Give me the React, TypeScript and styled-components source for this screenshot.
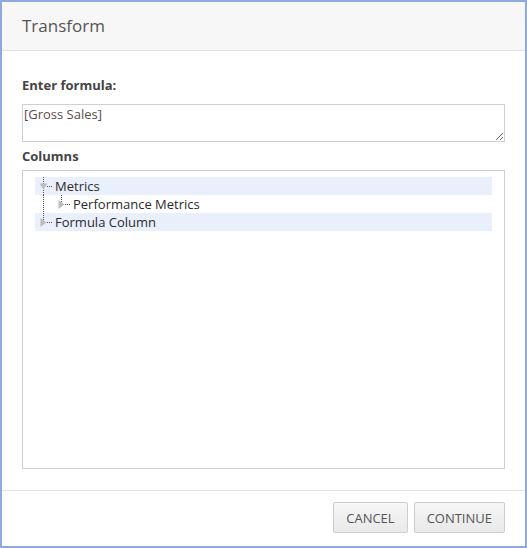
import React from "react";
import styled, { createGlobalStyle } from "styled-components";

const Global = createGlobalStyle`
  html, body { margin: 0; padding: 0; background: #fff; }
  body { font-family: "Open Sans", "Noto Sans", sans-serif; }
  * { box-sizing: border-box; }
`;

const Dialog = styled.div`
  width: 527px;
  height: 548px;
  border: 2px solid #8eabe0;
  background: #fff;
  display: flex;
  flex-direction: column;
`;

const Header = styled.div`
  height: 49px;
  flex: none;
  background: #f7f7f7;
  border-bottom: 1px solid #e1e1e1;
  display: flex;
  align-items: center;
  padding: 0 20px;
`;

const Title = styled.h1`
  margin: 0;
  font-size: 17px;
  font-weight: 400;
  color: #555;
  line-height: 22px;
`;

const Body = styled.div`
  flex: 1;
  display: flex;
  flex-direction: column;
  padding: 25px 20px 21px 20px;
  border-bottom: 1px solid #e3e3e3;
`;

const Label = styled.div<{ $mt?: number }>`
  font-size: 13px;
  font-weight: 700;
  color: #444;
  line-height: 18px;
  margin-top: ${(p) => p.$mt ?? 0}px;
`;

const Formula = styled.textarea`
  margin-top: 10px;
  width: 100%;
  height: 38px;
  border: 1px solid #cfcfcf;
  border-radius: 0;
  padding: 0 1px;
  font-family: "Open Sans", "Noto Sans", sans-serif;
  font-size: 13px;
  line-height: 18px;
  color: #5a4a4a;
  resize: vertical;
  outline: none;
  display: block;
`;

const TreeBox = styled.div`
  margin-top: 5px;
  flex: 1;
  border: 1px solid #cfcfcf;
  padding: 6px 12px;
`;

const Row = styled.div<{ $hl?: boolean; $indent?: number }>`
  height: 18px;
  display: flex;
  align-items: center;
  background: ${(p) => (p.$hl ? "#e9f0fb" : "transparent")};
  padding-left: ${(p) => p.$indent ?? 0}px;
  font-size: 13px;
  color: #2b2b2b;
  line-height: 18px;
  white-space: nowrap;
`;

const Connector = styled.svg<{ $w?: number }>`
  flex: none;
  width: ${(p) => p.$w ?? 20}px;
  height: 18px;
  display: block;
`;

const Footer = styled.div`
  height: 55px;
  flex: none;
  display: flex;
  justify-content: flex-end;
  align-items: flex-start;
  gap: 6px;
  padding: 11px 20px 0 20px;
`;

const Button = styled.button`
  height: 31px;
  padding: 0 12px;
  border: 1px solid #cdcdcd;
  border-radius: 2px;
  background: linear-gradient(#f6f6f6, #e9e9e9);
  font-family: "Open Sans", "Noto Sans", sans-serif;
  font-size: 13px;
  color: #555;
  cursor: pointer;
`;

type Kind = "open" | "closed";

const dot = { stroke: "#555", strokeWidth: 1, strokeDasharray: "1 1" };

function Icon({ kind, top, bottom }: { kind: Kind; top: boolean; bottom: boolean }) {
  return (
    <Connector viewBox="0 0 20 18">
      {top && <line x1="8.5" y1="0" x2="8.5" y2="7" {...dot} />}
      {bottom && <line x1="8.5" y1="11" x2="8.5" y2="18" {...dot} />}
      <line x1="12" y1="9.5" x2="18" y2="9.5" {...dot} />
      {kind === "open" ? (
        <polygon points="4.5,6.5 12.5,6.5 8.5,12.5" fill="#bdbdbd" />
      ) : (
        <polygon points="5.5,5 11.5,9.5 5.5,14" fill="#bdbdbd" />
      )}
    </Connector>
  );
}

function Guide() {
  return (
    <Connector $w={18} viewBox="0 0 18 18">
      <line x1="8.5" y1="0" x2="8.5" y2="18" {...dot} />
    </Connector>
  );
}

export default function App() {
  return (
    <>
      <Global />
      <Dialog>
        <Header>
          <Title>Transform</Title>
        </Header>
        <Body>
          <Label>Enter formula:</Label>
          <Formula defaultValue="[Gross Sales]" />
          <Label $mt={5}>Columns</Label>
          <TreeBox>
            <Row $hl>
              <Icon kind="open" top bottom />
              Metrics
            </Row>
            <Row>
              <Guide />
              <Icon kind="closed" top bottom={false} />
              Performance Metrics
            </Row>
            <Row $hl>
              <Icon kind="closed" top bottom={false} />
              Formula Column
            </Row>
          </TreeBox>
        </Body>
        <Footer>
          <Button>CANCEL</Button>
          <Button>CONTINUE</Button>
        </Footer>
      </Dialog>
    </>
  );
}
